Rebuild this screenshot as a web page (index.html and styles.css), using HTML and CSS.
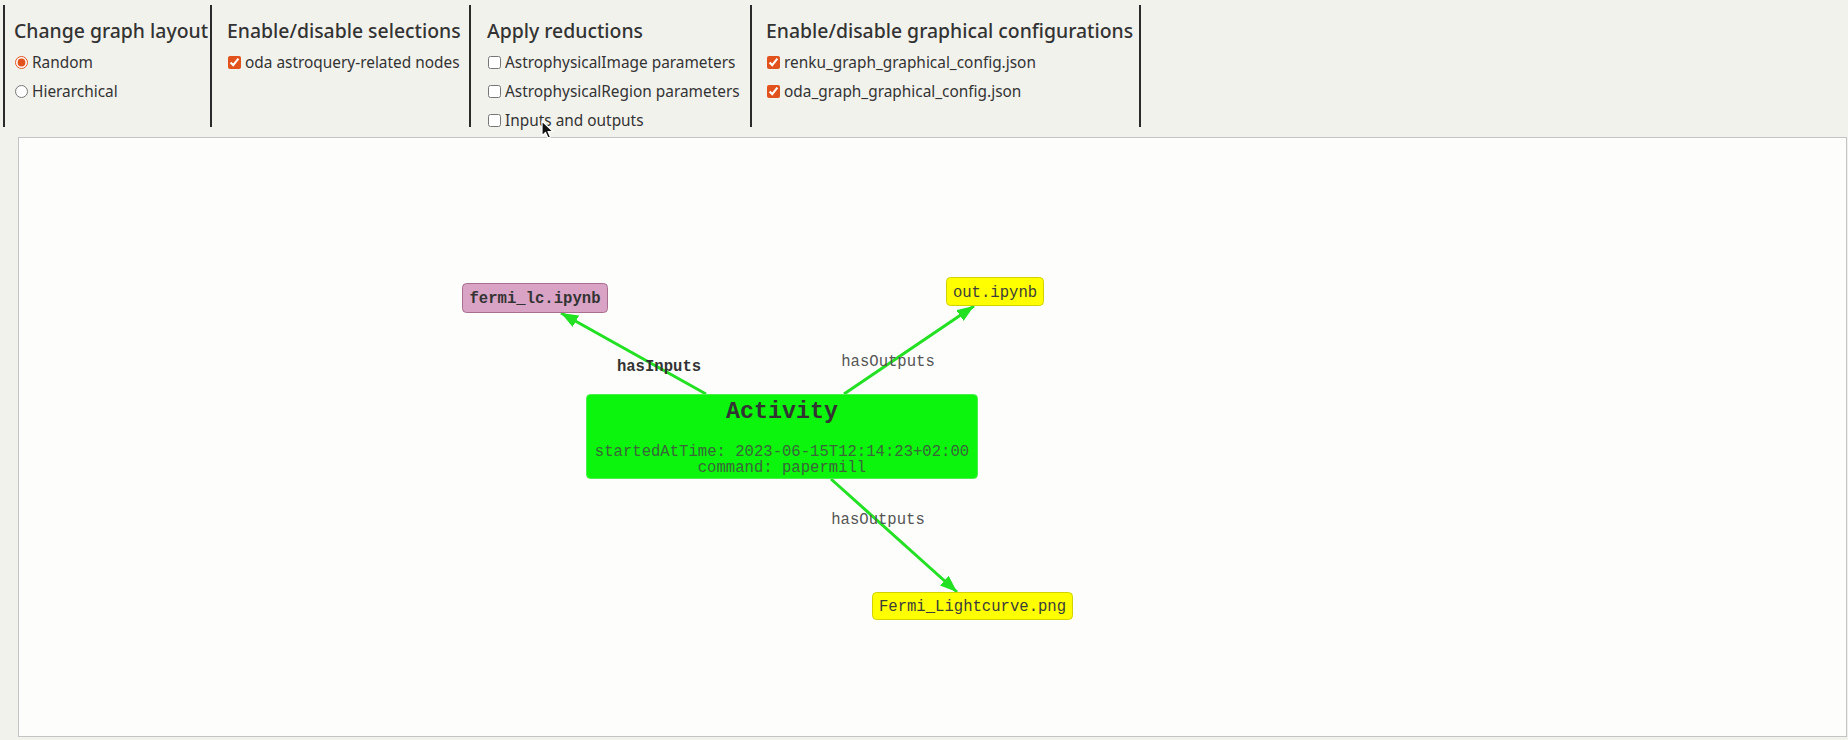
FILE: index.html
```html
<!DOCTYPE html>
<html lang="en">

<head>
    <meta charset="UTF-8">
    <title>Graph view</title>
    <link rel="stylesheet" href="styles.css">
</head>

<body>
    <div class="toolbar">
        <div class="group group-layout">
            <h3>Change graph layout</h3>
            <label class="option"><input type="radio" name="layout" checked>Random</label>
            <label class="option"><input type="radio" name="layout">Hierarchical</label>
        </div>
        <div class="group group-select">
            <h3>Enable/disable selections</h3>
            <label class="option"><input type="checkbox" checked>oda astroquery-related nodes</label>
        </div>
        <div class="group group-reduce">
            <h3>Apply reductions</h3>
            <label class="option"><input type="checkbox">AstrophysicalImage parameters</label>
            <label class="option"><input type="checkbox">AstrophysicalRegion parameters</label>
            <label class="option"><input type="checkbox">Inputs and outputs</label>
        </div>
        <div class="group group-config">
            <h3>Enable/disable graphical configurations</h3>
            <label class="option"><input type="checkbox" checked>renku_graph_graphical_config.json</label>
            <label class="option"><input type="checkbox" checked>oda_graph_graphical_config.json</label>
        </div>
    </div>

    <svg class="cursor" width="14" height="20" viewBox="0 0 14 20">
        <path d="M1 1 L1 16 L4.5 12.5 L7 18 L9.5 17 L7 11.5 L12 11.5 Z" fill="#111" stroke="#fff" stroke-width="1.2" stroke-linejoin="round"/>
    </svg>

    <div class="graph">
        <svg class="network" width="1827" height="598" viewBox="19 138 1827 598">
            <defs>
                <marker id="arrow" viewBox="0 0 17 13" refX="17" refY="6.5" markerWidth="17" markerHeight="13"
                    markerUnits="userSpaceOnUse" orient="auto">
                    <path d="M0,0 L17,6.5 L0,13 Z" fill="#22e022"/>
                </marker>
            </defs>

            <!-- edges -->
            <line class="edge" x1="706" y1="394" x2="561" y2="313" marker-end="url(#arrow)"/>
            <line class="edge" x1="844" y1="394" x2="974" y2="306" marker-end="url(#arrow)"/>
            <line class="edge" x1="831" y1="479" x2="957" y2="592" marker-end="url(#arrow)"/>

            <text class="edge-label strong" x="659" y="371">hasInputs</text>
            <text class="edge-label" x="888" y="366">hasOutputs</text>
            <text class="edge-label" x="878" y="524">hasOutputs</text>

            <!-- nodes -->
            <rect class="node-plan" x="462.5" y="283.5" width="145" height="29" rx="4"/>
            <text class="node-text strong" x="535" y="303">fermi_lc.ipynb</text>

            <rect class="node-file" x="946.5" y="277.5" width="97" height="28" rx="4"/>
            <text class="node-text" x="995" y="296.5">out.ipynb</text>

            <rect class="node-file" x="872.5" y="592.5" width="200" height="27" rx="4"/>
            <text class="node-text" x="972.5" y="611">Fermi_Lightcurve.png</text>

            <rect class="node-activity" x="586.5" y="394.5" width="391" height="84" rx="4"/>
            <text class="activity-title" x="782" y="418">Activity</text>
            <text class="activity-text" x="782" y="456">startedAtTime: 2023-06-15T12:14:23+02:00</text>
            <text class="activity-text" x="782" y="472">command: papermill</text>
        </svg>
    </div>
</body>

</html>
```

FILE: styles.css
```css
* {
    padding: 0;
    margin: 0;
    box-sizing: border-box;
}

body {
    width: 1848px;
    height: 740px;
    overflow: hidden;
    background-color: #f2f2ed;
    font-family: "Noto Sans", sans-serif;
    color: #333;
    position: relative;
}

.toolbar {
    display: flex;
    height: 122px;
    margin: 5px 0 0 3px;
}

.group {
    display: flex;
    flex-direction: column;
    border-left: 2px solid #2a2a2a;
    padding-top: 13px;
}

.group:last-child {
    border-right: 2px solid #2a2a2a;
}

.group-layout {
    width: 207px;
    padding-left: 9px;
}

.group-select {
    width: 259px;
    padding-left: 15px;
}

.group-reduce {
    width: 281px;
    padding-left: 16px;
}

.group-config {
    width: 391px;
    padding-left: 14px;
}

.group h3 {
    font-size: 19.4px;
    font-weight: 500;
    line-height: 26px;
    margin-bottom: 4px;
    white-space: nowrap;
}

.option {
    display: flex;
    flex-shrink: 0;
    align-items: center;
    height: 29px;
    font-size: 15.4px;
    white-space: nowrap;
}

.option input {
    width: 13px;
    height: 13px;
    margin: 0 4px 0 1px;
    accent-color: #e2521d;
}

.cursor {
    position: absolute;
    left: 541px;
    top: 120px;
}

.graph {
    width: 1829px;
    height: 600px;
    margin: 10px 0 0 18px;
    border: 1px solid #c4c4c4;
    background-color: #fdfdfb;
}

.network {
    display: block;
}

.edge {
    stroke: #22e022;
    stroke-width: 3;
}

.edge-label,
.node-text,
.activity-text {
    font-family: "Liberation Mono", monospace;
    font-size: 15.6px;
    text-anchor: middle;
    fill: #555;
}

.node-text {
    fill: #3c3c3c;
}

.strong {
    font-weight: bold;
    fill: #333;
}

.node-plan {
    fill: #d9a3c5;
    stroke: #a86e90;
    stroke-width: 1;
}

.node-file {
    fill: #ffff00;
    stroke: #d2d200;
    stroke-width: 1;
}

.node-activity {
    fill: #0cf50c;
    stroke: #4cee4c;
    stroke-width: 1;
}

.activity-title {
    font-family: "Liberation Mono", monospace;
    font-size: 23.3px;
    font-weight: bold;
    text-anchor: middle;
    fill: #333;
}

.activity-text {
    fill: #3a663a;
}
```
